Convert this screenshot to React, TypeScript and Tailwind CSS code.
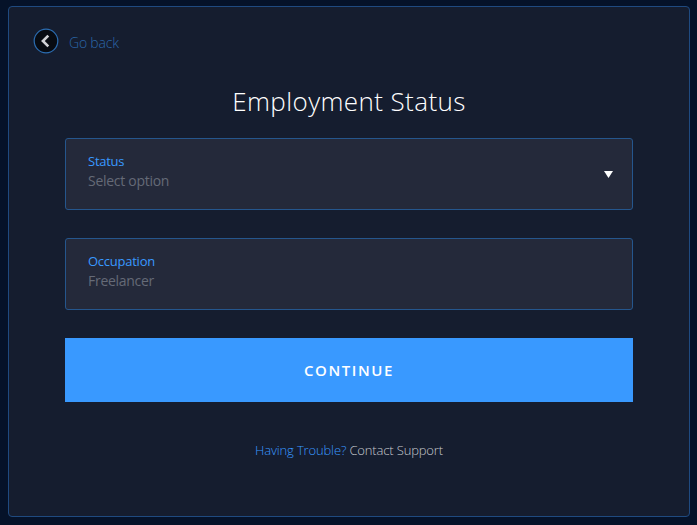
export default function App() {
  return (
    <main className="h-[525px] w-[697px] overflow-hidden bg-[#051229] pl-2 pt-1.5 font-['Open_Sans',sans-serif]">
      <section className="flex h-[511px] w-[682px] flex-col rounded-[4px] border border-[#1f4a80] bg-[#151d2f] px-14">
        <button className="-ml-8 mt-[21px] flex h-[26px] w-[100px] items-center gap-[10px] text-left">
          <svg className="size-[26px] shrink-0" viewBox="0 0 26 26" fill="none">
            <circle cx="13" cy="13" r="11.8" fill="#070b12" stroke="#2b6cb0" strokeWidth="1.2" />
            <path d="M15.3 7.6L9.9 13L15.3 18.4" stroke="#d0d2d6" strokeWidth="2.6" />
          </svg>
          <span className="whitespace-nowrap pt-[3px] text-[14px] font-light tracking-[-0.2px] text-[#2b67aa]">Go back</span>
        </button>
        <h1 className="mt-[27px] h-10 text-center text-[26px] font-light leading-10 tracking-[0.4px] text-white">Employment Status</h1>
        <div className="mt-[17px] flex h-[72px] w-[568px] items-center justify-between rounded-[3px] border border-[#25568d] bg-[#24293a] pl-[22px] pr-[19px]">
          <div className="pb-1.5">
            <div className="text-[13px] leading-[19px] tracking-[-0.25px] text-[#3999ff]">Status</div>
            <div className="text-[14px] leading-[19px] tracking-[-0.28px] text-[#656a77]">Select option</div>
          </div>
          <svg className="h-[7px] w-[9px]" viewBox="0 0 9 7"><path d="M0 0H9L4.5 7Z" fill="white" /></svg>
        </div>
        <div className="mt-7 flex h-[72px] w-[568px] items-center rounded-[3px] border border-[#25568d] bg-[#24293a] pl-[22px]">
          <div className="pb-1.5">
            <div className="text-[13px] leading-[19px] tracking-[-0.25px] text-[#3999ff]">Occupation</div>
            <div className="text-[14px] leading-[19px] tracking-[-0.28px] text-[#656a77]">Freelancer</div>
          </div>
        </div>
        <button className="mt-7 h-16 w-[568px] bg-[#3999ff] text-[15px] font-semibold tracking-[1.6px] text-white">CONTINUE</button>
        <p className="mt-[38px] text-center text-[13px] font-light leading-5 tracking-[-0.15px] text-[#c5c8ce]"><span className="text-[#3999ff]">Having Trouble?</span> Contact Support</p>
      </section>
    </main>
  );
}
